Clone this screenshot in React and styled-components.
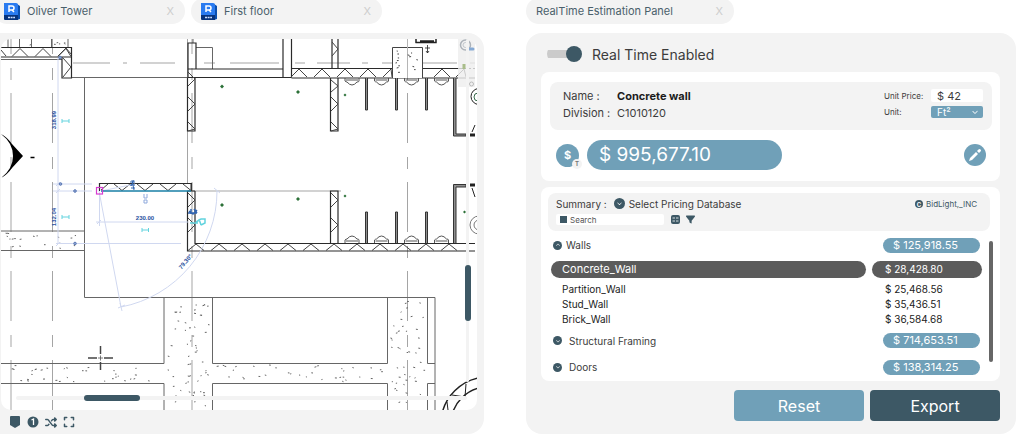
import { useState } from "react";
import styled, { createGlobalStyle } from "styled-components";
import {
  FaShuffle,
  FaFilter,
  FaChevronDown,
  FaChevronUp,
  FaExpand,
} from "react-icons/fa6";

const GlobalStyle = createGlobalStyle`
  * {
    box-sizing: border-box;
  }
  body {
    margin: 0;
    background: #fff;
    color: #3c3c3c;
    font-family: Inter, "Open Sans", sans-serif;
    font-size: 11px;
  }
  button, input, select {
    font: inherit;
    color: inherit;
    border: 0;
    margin: 0;
    padding: 0;
    background: none;
  }
  button {
    cursor: pointer;
  }
`;

const Page = styled.div`
  display: grid;
  grid-template-columns: minmax(0, 484fr) minmax(0, 490fr);
  column-gap: 42px;
  padding: 0 8px 2px 0;
  overflow: hidden;
`;

const Column = styled.div`
  display: flex;
  flex-direction: column;
`;

const TabBar = styled.nav`
  display: flex;
  gap: 6px;
  margin: -2px 0 9px ${(props) => (props.$bleed ? "-6px" : "0")};
`;

const Tab = styled.div`
  display: flex;
  align-items: center;
  gap: 7px;
  width: ${(props) => (props.$wide ? "208px" : "191px")};
  height: 26px;
  padding: 0 11px 0 10px;
  border-radius: 13px;
  background: #f3f3f3;
  color: #4a606b;
`;

const TabName = styled.button`
  flex: 1;
  text-align: left;
  white-space: nowrap;
`;

const TabClose = styled.button`
  color: #cdcdcd;
`;

const Panel = styled.section`
  display: flex;
  flex-direction: column;
  flex: 1;
  background: #f3f3f3;
  border-radius: ${(props) => (props.$bleed ? "0 16px 16px 0" : "16px")};
  padding: ${(props) => (props.$bleed ? "6px 7px 0 1px" : "0 16px 12px 15px")};
`;

const Canvas = styled.div`
  position: relative;
  background: #fff;
  border-radius: 10px;
  overflow: hidden;
  svg {
    display: block;
    width: 100%;
  }
`;

const ScrollTrack = styled.div`
  position: absolute;
  display: flex;
  align-items: center;
  border-radius: 2px;
  background: #f3f3f3;
  ${(props) =>
    props.$vertical
      ? "right: 8px; top: 0; bottom: 28px; width: 3px; flex-direction: column;"
      : "left: 15px; right: 10px; bottom: 10px; height: 4px;"}
`;

const ScrollThumb = styled.div`
  flex: none;
  border-radius: 3px;
  background: #3d5865;
  ${(props) =>
    props.$vertical
      ? "width: 6px; height: 56px; margin-top: 226px;"
      : "width: 56px; height: 6px; margin-left: 68px;"}
`;

const ViewTools = styled.div`
  display: flex;
  align-items: center;
  gap: 6px;
  height: 24px;
  padding-left: 8px;
`;

const ToolButton = styled.button`
  display: flex;
  align-items: center;
  justify-content: center;
  width: 12px;
  height: 12px;
  color: #3d5865;
`;

const SwitchLabel = styled.label`
  display: flex;
  align-items: center;
  gap: 10px;
  height: 39px;
  padding: 3px 0 0 6px;
  font-size: 14px;
`;

const Switch = styled.input`
  appearance: none;
  display: flex;
  align-items: center;
  width: 35px;
  height: 16px;
  margin: 0;
  background: linear-gradient(#cbcbcb, #cbcbcb) 0 50% / 32px 8px no-repeat;
  border-radius: 8px;
  &::before {
    content: "";
    width: 16px;
    height: 16px;
    border-radius: 50%;
    background: #3d5865;
    margin-left: ${(props) => (props.checked ? "19px" : "0")};
  }
`;

const Card = styled.div`
  background: #fff;
  border-radius: 8px;
  padding: ${(props) => props.$pad};
  margin-bottom: ${(props) => props.$gap};
`;

const InfoBox = styled.div`
  display: flex;
  justify-content: space-between;
  height: 48px;
  padding: 6px 9px 6px 13px;
  border-radius: 8px;
  background: #f3f3f3;
`;

const Facts = styled.dl`
  display: grid;
  grid-template-columns: 54px auto;
  grid-auto-rows: 17px;
  margin: 0;
  line-height: 17px;
  dd {
    margin: 0;
  }
`;

const Strong = styled.dd`
  color: #1c1c1c;
  font-weight: 700;
`;

const UnitForm = styled.div`
  display: grid;
  grid-template-columns: 47px 52px;
  row-gap: 4px;
  align-content: start;
  align-items: center;
  padding-top: 1px;
  font-size: 8px;
`;

const PriceInput = styled.input`
  width: 52px;
  height: 13px;
  padding-left: 6px;
  border-radius: 2px;
  background: #fff;
  font-size: 11px;
`;

const SelectWrap = styled.div`
  display: flex;
  align-items: center;
  height: 12px;
  padding-right: 5px;
  border-radius: 2px;
  background: #70a0b8;
  color: #fff;
`;

const UnitSelect = styled.select`
  appearance: none;
  flex: 1;
  height: 12px;
  padding-left: 6px;
  font-size: 10px;
  line-height: 12px;
`;

const TotalRow = styled.div`
  display: flex;
  align-items: center;
  gap: 8px;
  padding: 10px 6px 0 6px;
`;

const Currency = styled.button`
  position: relative;
  width: 23px;
  height: 23px;
  border-radius: 50%;
  background: #70a0b8;
  color: #fff;
  font-size: 11px;
  font-weight: 700;
`;

const CurrencyBadge = styled.span`
  position: absolute;
  right: -3px;
  bottom: -2px;
  width: 10px;
  height: 10px;
  border-radius: 50%;
  background: #f3f3f3;
  color: #777;
  font-size: 6px;
  line-height: 10px;
`;

const Total = styled.output`
  width: 195px;
  height: 30px;
  padding-left: 12px;
  border-radius: 15px;
  background: #70a0b8;
  color: #fff;
  font-size: 19px;
  line-height: 30px;
`;

const EditButton = styled.button`
  display: flex;
  align-items: center;
  justify-content: center;
  width: 22px;
  height: 22px;
  margin-left: auto;
  border-radius: 50%;
  background: #70a0b8;
`;

const SummaryHead = styled.div`
  display: flex;
  justify-content: space-between;
  height: 38px;
  margin-right: 10px;
  padding: 3px 13px 6px 8px;
  border-radius: 8px;
  background: #f3f3f3;
  font-size: 10px;
`;

const HeadLine = styled.div`
  display: flex;
  align-items: center;
  gap: 7px;
  height: 15px;
`;

const Database = styled.button`
  display: flex;
  align-items: center;
  gap: 4px;
  font-size: 10px;
`;

const Vendor = styled.a`
  display: flex;
  align-items: center;
  gap: 3px;
  height: 16px;
  color: #3d5865;
  font-size: 8px;
  text-decoration: none;
`;

const SearchLine = styled.div`
  display: flex;
  align-items: center;
  gap: 3px;
  margin-top: 3px;
  height: 11px;
`;

const SearchBox = styled.label`
  display: flex;
  align-items: center;
  gap: 3px;
  width: 108px;
  height: 11px;
  margin-right: 2px;
  padding-left: 4px;
  border-radius: 2px;
  background: #fff;
  &::before {
    content: "";
    width: 7px;
    height: 7px;
    background: #3d5865;
  }
`;

const SearchInput = styled.input`
  width: 88px;
  height: 11px;
  font-size: 8px;
  &::placeholder {
    color: #555;
    opacity: 1;
  }
`;

const Round = styled.span`
  display: flex;
  align-items: center;
  justify-content: center;
  width: ${(props) => props.$size}px;
  height: ${(props) => props.$size}px;
  border-radius: 50%;
  background: #3d5865;
  color: #fff;
  font-size: 6px;
  font-weight: 700;
  flex: none;
`;

const ListArea = styled.div`
  display: flex;
  gap: 7px;
  padding: 2px 0 0 3px;
`;

const PriceTable = styled.table`
  flex: 1;
  table-layout: fixed;
  border-collapse: collapse;
  font-size: 10px;
  th, td {
    padding: 0;
    text-align: left;
    font-weight: 400;
  }
  td {
    width: 110px;
  }
`;

const GroupRow = styled.tr`
  height: ${(props) => props.$height}px;
`;

const GroupButton = styled.button`
  display: flex;
  align-items: center;
  gap: ${(props) => (props.$open ? "4px" : "7px")};
  padding-left: 2px;
`;

const GroupPrice = styled.div`
  width: 97px;
  height: 15px;
  margin-left: 11px;
  padding-left: 10px;
  border-radius: 8px;
  background: #70a0b8;
  color: #fff;
  font-size: 11px;
  line-height: 15px;
`;

const SelectedRow = styled.tr`
  height: 24px;
  color: #fff;
`;

const Bar = styled.div`
  height: 17px;
  margin-right: ${(props) => (props.$price ? "0" : "6px")};
  padding-left: ${(props) => (props.$price ? "13px" : "11px")};
  border-radius: 9px;
  background: #5b5b5b;
  font-size: ${(props) => (props.$price ? "10px" : "11px")};
  line-height: 16px;
`;

const ItemRow = styled.tr`
  height: 15px;
  color: #222;
  th {
    padding-left: 11px;
  }
  td {
    padding-left: 13px;
  }
`;

const ListScroll = styled.div`
  width: 4px;
  height: 121px;
  margin: 8px 7px 0 0;
  border-radius: 2px;
  background: #666;
`;

const Actions = styled.div`
  display: flex;
  justify-content: flex-end;
  gap: 6px;
`;

const ActionButton = styled.button`
  width: 130px;
  height: 31px;
  border-radius: 4px;
  background: ${(props) => (props.$primary ? "#3d5865" : "#70a0b8")};
  color: #fff;
  font-size: 16px;
`;

function RevitLogo() {
  return (
    <svg width="16" height="17" viewBox="0 0 16 17" aria-hidden="true">
      <path d="M1 1h12l3 2v13l-3 1H1z" fill="#0b4fae" />
      <path d="M0 0h12q2 0 2 2v10H0z" fill="#2a7bf0" />
      <path d="M0 12h14v5H1q-1 0-1-1z" fill="#07337c" />
      <path
        d="M5 9V3h3q2 0 2 2T8 7H5M8 7l2 2"
        fill="none"
        stroke="#fff"
        strokeWidth="1.5"
      />
      <path d="M4 14.500h7" stroke="#cfe0ff" strokeWidth="1.500" strokeDasharray="2 .6" />
    </svg>
  );
}

// zig-zag insulation hatch between two wall faces
function hatchX(x1, x2, top, bottom, step = 23) {
  let d = "";
  for (let x = x1; x < x2 - 6; x += step) {
    const mid = Math.min(x + 8, x2);
    const end = Math.min(x + 16, x2);
    d += `M${x} ${bottom}L${mid} ${top}L${end} ${bottom}`;
  }
  return d;
}

function hatchY(y1, y2, left, right) {
  let d = "";
  for (let y = y1; y < y2 - 5; y += 25) {
    d += `M${left} ${y}L${right} ${y + 7}L${left} ${Math.min(y + 14, y2)}`;
  }
  return d;
}

// concrete speckle, seeded so that it stays the same between renders
function speckle(x, y, w, h, count, seed) {
  let s = seed * 7919;
  const next = () => {
    s = (s * 16807) % 2147483647;
    return s / 2147483647;
  };
  let d = "";
  for (let i = 0; i < count; i += 1) {
    const px = x + 2 + next() * (w - 5);
    const py = y + 2 + next() * (h - 4);
    d += `M${px.toFixed(1)} ${py.toFixed(1)}l${(1 + next()).toFixed(1)} ${(next() - 0.5).toFixed(1)}`;
  }
  return d;
}

const SINKS = [352, 381.5, 411.5, 441.5];
const STALLS = [366.5, 396.5, 426.5];
const PLANTS = [
  [222, 86.5, 2],
  [298, 92, 2],
  [345, 95, 1.5],
  [222, 205, 2],
  [298, 199, 2],
  [345, 196, 1.5],
  [464.5, 212, 1.5],
];

function FloorPlan() {
  return (
    <svg viewBox="1 39 476 371" fill="none" role="img" aria-label="Floor plan">
      <g stroke="#a5a5a5" strokeWidth="1">
        {[11, 52.5, 192, 407.5].map((x) => (
          <path key={x} d={`M${x} 4V410`} strokeDasharray="50 14 12 13" />
        ))}
        <path d="M73 63H110M123 63h4M140 63h35M204 63h11M230 63h49M295 63h10M317 63h33M362 63h6M382 63h75M470 63h5" />
        <path d="M187.500 39V184M192 191H341" />
      </g>

      <g stroke="#666" strokeWidth="1">
        <path d="M71 77.500H188M84.500 78V297.500H435V410" />
        <path d="M1 231H84M1 250.500H84" />
        <path d="M164 297.500V363.500H1M1 383.500H164V410M212.500 297.500V363.500H387.500V297.500M212.500 410V383.500H387.500V410M427.500 297.500V363.500H435M435 383.500H427.500V410" />
        <path d="M8 39v8M19.500 39v8M31.500 39v8M51.500 39v8M68 39v8M196 47.500H212.500V69" />
        <path d="M1 59.500H62M193 39v4" />
      </g>

      <path
        stroke="#666"
        strokeWidth="1"
        d={[
          speckle(1, 231, 83, 20, 18, 17),
          speckle(1, 363, 163, 21, 34, 91),
          speckle(164, 297, 48, 113, 58, 45),
          speckle(212, 363, 175, 21, 34, 77),
          speckle(388, 297, 39, 113, 46, 33),
          speckle(20, 40, 48, 7, 6, 12),
        ].join("")}
      />

      <g stroke="#2a2a2a" strokeWidth="1.200">
        <path d="M1 47.500H71.500V78H62V57H1M62 57h9" />
        <path d="M188 43h8v26h-8zM188 77.500H291.500M188 69H283M283 39V77M291.500 39V77.500M188 69v9" />
        <path d="M291.500 68.500H392.500M291.500 78H466M422.500 68.500H466" />
        <path d="M332 39V68M338 39V68M330.500 78V131H338V78" />
        <path d="M187.500 78V131H195V78" />
        <path d="M187.500 191V251H466M195 191V243.500H466M187.500 191h7.500M330.500 243V191H338V243" />
        <path d="M99.500 191V183.500H191.500V191" />
        <path d="M469 68.500h2M473 68.500h2M469 78h6M469 243.500h6M469 251h6" />
      </g>
      <g stroke="#444" strokeWidth="1">
        <path d={hatchX(12, 71, 48.5, 56.5, 23)} />
        <path d="M1 50l5 6M58 56l8-8 5 6M63 58l8 9-8 10" />
        <path d={hatchX(291, 392, 69, 77, 23)} />
        <path d={hatchX(434, 466, 69, 77, 22)} />
        <path d={hatchX(188, 466, 244, 250.5, 23)} />
        <path d={hatchX(114, 191, 190.5, 184, 23)} />
        <path d="M101 190l7-6" />
        <path d={hatchY(72, 131, 188, 195)} clipPath="inset(0)" />
        <path d={hatchY(97, 131, 331, 338)} />
        <path d="M331 80l7 6-7 6" />
        <path d={hatchY(42, 68, 332, 338)} />
        <path d={hatchY(193, 243, 188, 195)} />
        <path d={hatchY(193, 243, 331, 338)} />
      </g>

      <path d="M392.500 78V47.500H422.500V78" stroke="#444" fill="#fff" />
      <path d="M407.500 39V78" stroke="#b5b5b5" />
      <path d={speckle(393, 48, 29, 29, 14, 29)} stroke="#444" />

      <g fill="#8f8f8f" stroke="#333" strokeWidth="1">
        {STALLS.map((x) => (
          <g key={x}>
            <path d={`M${x - 1} 78v32h2v-32`} />
            <path d={`M${x - 1} 243v-31h2v31`} />
          </g>
        ))}
        <path d="M453.500 78V136H466V134H456V78M453.500 243V184.500H466V187H456V243" />
      </g>
      <g stroke="#555" strokeWidth="1">
        {SINKS.map((x) => (
          <g key={x}>
            <path d={`M${x - 7} 78v3q1 1 2 1q5 6 10 0q2 0 2-1v-3M${x - 6} 80h12`} />
            <path d={`M${x - 7} 243v-3q1-1 2-1q5-6 10 0q2 0 2 1v3M${x - 6} 241h12`} />
          </g>
        ))}
      </g>
      <g stroke="#222">
        <path d="M415.500 42.500H436V39M416 39v4M420 41h14" strokeWidth="1.500" />
        <path d="M427.500 45v8M425 48h5M426 51l1.500 2 1.500-2" strokeWidth=".8" />
        <path d="M470 135h5M470 185h5" strokeWidth="3" />
        <path d="M472 132l3-7M472 188l3 9" />
        <circle cx="479" cy="96.500" r="8" />
        <circle cx="478" cy="97" r="4" stroke="#386b4c" />
        <circle cx="479" cy="225" r="9" stroke="#777" />
        <circle cx="479" cy="225" r="5" stroke="#777" />
        <circle cx="488" cy="424" r="47" strokeWidth="1.500" />
        <circle cx="488" cy="424" r="37" strokeWidth="1.500" />
        <path d="M447 402l1 8M452 395l13 2 1-13" />
      </g>

      <g fill="#2c7138">
        {PLANTS.map(([x, y, r]) => (
          <path key={`${x}-${y}`} d={`M${x - r} ${y}l${r} ${-r}l${r} ${r}l${-r} ${r}z`} />
        ))}
      </g>

      <path d="M1 134Q7 137 12 144L23 156L12 168Q7 175 1 178Q13 169 13 156T1 134z" fill="#000" />
      <path d="M30.500 157.500h4" stroke="#000" strokeWidth="1.500" />

      <g stroke="#d0d8f0" strokeWidth="1">
        <path d="M58 58V244M53 184H92M53 191H92M56 243.500H181M99.500 194V226M96 222H188M99 191L121 307" />
        <path d="M217 191A118 118 0 0 1 121 307M118 308l7-3M120 303l2 8M214 188l6 5" />
        <path d="M56 186l4-4M56 193l4-4M56 246l4-4M97 224l4-4" />
        <path d="M101 191L135 184" />
      </g>
      <path d="M101 191H191" stroke="#197fa6" strokeWidth="1.500" />
      <rect x="96.500" y="187.500" width="6" height="6.500" stroke="#d53bd0" strokeWidth="1.200" />
      <g stroke="#5b79b5" fill="#8fa5d2">
        <circle cx="60" cy="57.500" r="1.300" />
        <circle cx="60.500" cy="184" r="1.300" />
        <circle cx="75" cy="191" r="1.300" />
        <circle cx="75" cy="243.500" r="1.300" />
      </g>
      <g stroke="#3164b0">
        <path d="M130 182h5M130 185h5M131 188h4M132 180l2 10M134 180l-3 6" />
        <path d="M144 194v4h3v-4M144 200h3v3h-3z" stroke="#8fa9dc" />
        <path d="M189 211l4 3 4-4M188 213h9M191 209v5M194 209l3 4" strokeWidth="1.500" />
      </g>
      <g stroke="#62d3de">
        <path d="M62 119v4M69 119v4M62 121h7M62 215v4M69 215v4M62 217h7M142 228v4M148.500 228v4M142 230h6" />
        <path d="M190 223h8M196 222l5-3h4v4l-4 2M199 219l2 6" strokeWidth="1.500" />
      </g>
      <g
        fill="#274f9e"
        fontFamily="Liberation Sans, sans-serif"
        fontSize="6"
        fontWeight="700"
        textAnchor="middle"
      >
        <text x="145" y="219.500">230.00</text>
        <text transform="translate(55.5 120) rotate(-90)">318.99</text>
        <text transform="translate(55.5 217) rotate(-90)">132.04</text>
        <text transform="translate(187 263) rotate(-50)">79.30°</text>
      </g>

      <g stroke="#444" strokeWidth="1.500">
        <path d="M88 358h9M104 358h9M100.500 346v8M100.500 362v8" />
        <path d="M98 358h5M100.500 355.500v5" strokeWidth=".7" />
      </g>

      <rect x="458" y="39" width="17" height="48" fill="#ededed" opacity=".8" />
      <circle cx="465.500" cy="45" r="5" stroke="#adb3ba" strokeWidth="1.500" />
      <circle cx="465.500" cy="45" r="2.500" stroke="#c1c6cc" />
      <path d="M468 49h5" stroke="#85a9d4" strokeWidth="3" strokeLinecap="round" />
      <path d="M464 64v5" stroke="#a9bd8a" strokeWidth="3" />
      <circle cx="471.500" cy="84" r="2" stroke="#bbb" />
    </svg>
  );
}

const GROUPS = [
  {
    name: "Walls",
    total: "$ 125,918.55",
    height: 24,
    items: [
      { name: "Concrete_Wall", price: "$  28,428.80", selected: true },
      { name: "Partition_Wall", price: "$ 25,468.56" },
      { name: "Stud_Wall", price: "$ 35,436.51" },
      { name: "Brick_Wall", price: "$ 36,584.68" },
    ],
  },
  { name: "Structural Framing", total: "$ 714,653.51", height: 29, items: [] },
  { name: "Doors", total: "$ 138,314.25", height: 24, items: [] },
];

function Item({ item }) {
  if (item.selected) {
    return (
      <SelectedRow>
        <th scope="row">
          <Bar>{item.name}</Bar>
        </th>
        <td>
          <Bar $price>{item.price}</Bar>
        </td>
      </SelectedRow>
    );
  }
  return (
    <ItemRow>
      <th scope="row">{item.name}</th>
      <td>{item.price}</td>
    </ItemRow>
  );
}

function Group({ group }) {
  const open = group.items.length > 0;
  return (
    <>
      <GroupRow $height={group.height}>
        <th scope="row">
          <GroupButton $open={open}>
            <Round $size={9}>{open ? <FaChevronUp size={4} /> : <FaChevronDown size={4} />}</Round>
            {group.name}
          </GroupButton>
        </th>
        <td>
          <GroupPrice>{group.total}</GroupPrice>
        </td>
      </GroupRow>
      {group.items.map((item) => (
        <Item key={item.name} item={item} />
      ))}
    </>
  );
}

export default function App() {
  const [enabled, setEnabled] = useState(true);

  return (
    <Page>
      <GlobalStyle />
      <Column>
        <TabBar $bleed>
          {["Oliver Tower", "First floor"].map((name) => (
            <Tab key={name}>
              <RevitLogo />
              <TabName>{name}</TabName>
              <TabClose aria-label={`Close ${name}`}>X</TabClose>
            </Tab>
          ))}
        </TabBar>
        <Panel $bleed>
          <Canvas>
            <FloorPlan />
            <ScrollTrack>
              <ScrollThumb />
            </ScrollTrack>
            <ScrollTrack $vertical>
              <ScrollThumb $vertical />
            </ScrollTrack>
          </Canvas>
          <ViewTools>
            <ToolButton aria-label="Tag">
              <svg width="12" height="12" viewBox="0 0 12 12">
                <path d="M2 0h8q1 0 1 1v8L6 12 1 9V1q0-1 1-1z" fill="currentColor" />
              </svg>
            </ToolButton>
            <ToolButton aria-label="Level">
              <svg width="12" height="12" viewBox="0 0 12 12">
                <circle cx="6" cy="6" r="5.500" fill="currentColor" />
                <path d="M4.500 4l2-1v6" fill="none" stroke="#fff" strokeWidth="1.300" />
              </svg>
            </ToolButton>
            <ToolButton aria-label="Shuffle">
              <FaShuffle size={13} />
            </ToolButton>
            <ToolButton aria-label="Full screen">
              <FaExpand size={12} />
            </ToolButton>
          </ViewTools>
        </Panel>
      </Column>

      <Column>
        <TabBar>
          <Tab $wide>
            <TabName>RealTime Estimation Panel</TabName>
            <TabClose aria-label="Close RealTime Estimation Panel">X</TabClose>
          </Tab>
        </TabBar>
        <Panel>
          <SwitchLabel>
            <Switch
              type="checkbox"
              role="switch"
              checked={enabled}
              onChange={(e) => setEnabled(e.target.checked)}
            />
            Real Time Enabled
          </SwitchLabel>

          <Card $pad="10px 8px 11px 9px" $gap="6px">
            <InfoBox>
              <Facts>
                <dt>Name :</dt>
                <Strong>Concrete wall</Strong>
                <dt>Division :</dt>
                <dd>C1010120</dd>
              </Facts>
              <UnitForm>
                <label htmlFor="unit-price">Unit Price:</label>
                <PriceInput id="unit-price" defaultValue="$ 42" />
                <label htmlFor="unit">Unit:</label>
                <SelectWrap>
                  <UnitSelect id="unit">
                    <option>Ft²</option>
                  </UnitSelect>
                  <FaChevronDown size={6} />
                </SelectWrap>
              </UnitForm>
            </InfoBox>
            <TotalRow>
              <Currency aria-label="Currency">
                $<CurrencyBadge>T</CurrencyBadge>
              </Currency>
              <Total>$ 995,677.10</Total>
              <EditButton aria-label="Edit total">
                <svg width="12" height="12" viewBox="0 0 12 12" fill="#fff">
                  <path d="M0 12l1-3 6-6 2 2-6 6zM8 2l1.500-1.500q1-1 2 0t0 2L10 4z" />
                </svg>
              </EditButton>
            </TotalRow>
          </Card>

          <Card $pad="6px 0 2px 7px" $gap="9px">
            <SummaryHead>
              <div>
                <HeadLine>
                  <span>Summary :</span>
                  <Database>
                    <Round $size={11}>
                      <FaChevronDown size={5} />
                    </Round>
                    Select Pricing Database
                  </Database>
                </HeadLine>
                <SearchLine>
                  <SearchBox>
                    <SearchInput placeholder="Search" aria-label="Search" />
                  </SearchBox>
                  <ToolButton aria-label="Columns">
                    <svg width="9" height="9" viewBox="0 0 9 9">
                      <rect width="9" height="9" rx="2" fill="currentColor" />
                      <path d="M1.500 3h2.500M5 3h2.500M1.500 6h2.500M5 6h2.500" stroke="#d5dde1" />
                    </svg>
                  </ToolButton>
                  <ToolButton aria-label="Filter">
                    <FaFilter size={9} />
                  </ToolButton>
                </SearchLine>
              </div>
              <Vendor href="#">
                <Round $size={8}>C</Round>
                BidLight,_INC
              </Vendor>
            </SummaryHead>
            <ListArea>
              <PriceTable>
                <tbody>
                  {GROUPS.map((group) => (
                    <Group key={group.name} group={group} />
                  ))}
                </tbody>
              </PriceTable>
              <ListScroll />
            </ListArea>
          </Card>

          <Actions>
            <ActionButton>Reset</ActionButton>
            <ActionButton $primary>Export</ActionButton>
          </Actions>
        </Panel>
      </Column>
    </Page>
  );
}
